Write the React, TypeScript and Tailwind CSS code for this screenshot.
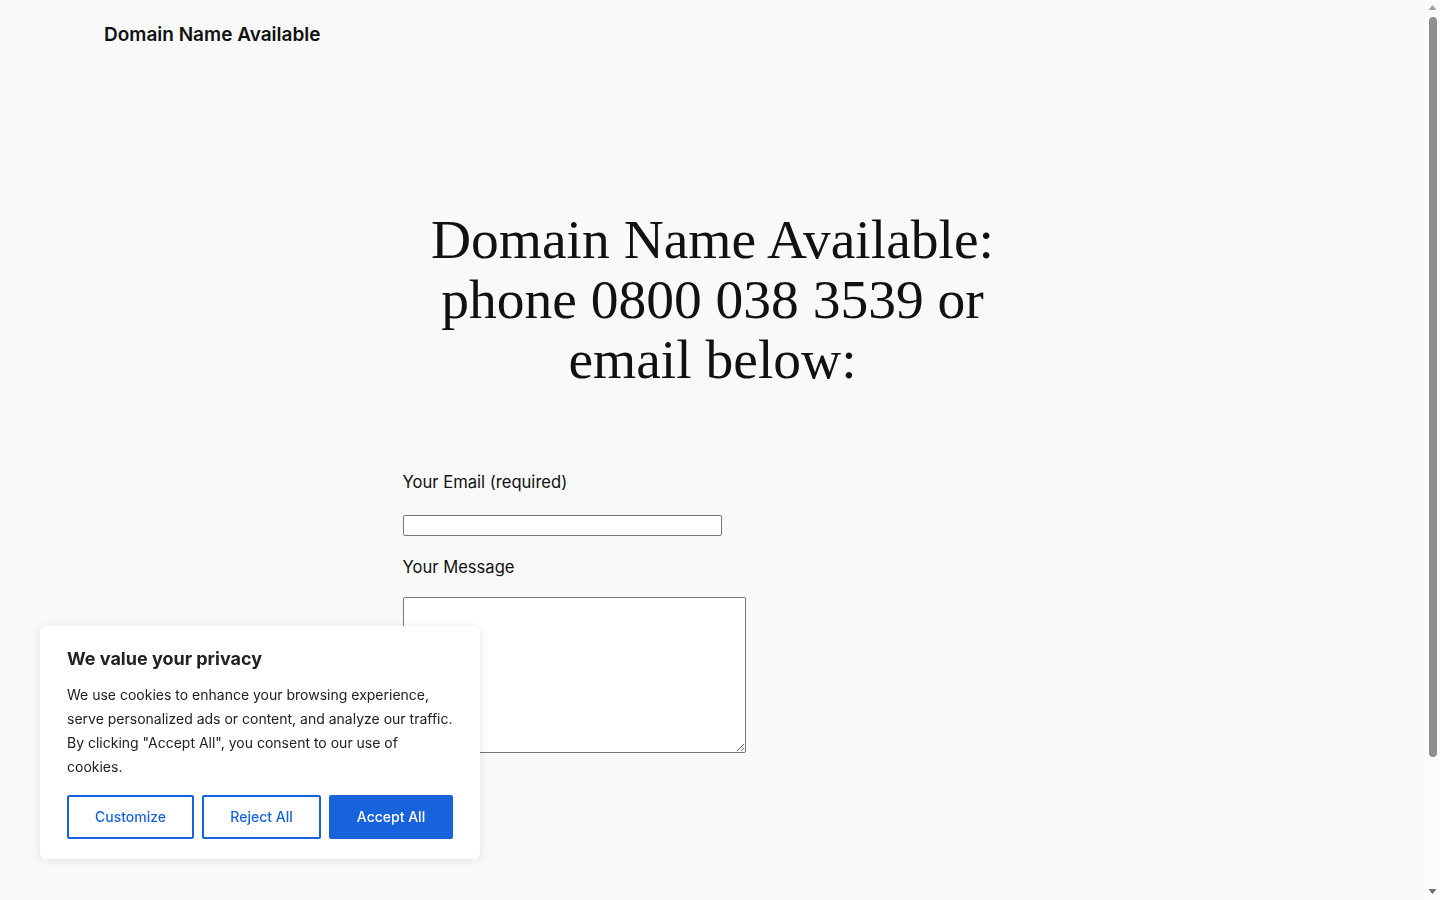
import React from "react";

function FakeScrollbar() {
  return (
    <div className="fixed right-0 top-0 flex h-screen w-[15px] flex-col items-center bg-[#fbfbfb]">
      <svg width="15" height="15" viewBox="0 0 15 15" className="shrink-0">
        <polygon points="3.5,10 11.5,10 7.5,5" fill="#a3a3a3" />
      </svg>
      <div className="mt-[2px] h-[740px] w-[8px] rounded-full bg-[#8f8f8f]" />
      <div className="flex-1" />
      <svg width="15" height="15" viewBox="0 0 15 15" className="shrink-0">
        <polygon points="3.5,4 11.5,4 7.5,9" fill="#6f6f6f" />
      </svg>
    </div>
  );
}

export default function App() {
  return (
    <div className="min-h-[1050px] bg-[#f9f9f9] pr-[15px] text-[#111111]" style={{ fontFamily: "Inter, 'Noto Sans', sans-serif" }}>
      <header className="px-[104px] pt-[22px]">
        <div className="text-[19px] font-semibold leading-[25px] text-[#111]">Domain Name Available</div>
      </header>
      <main className="mx-auto w-[620px] pt-[163px]">
        <h1
          className="text-center text-[55.5px] leading-[60px] font-normal text-[#111]"
          style={{ fontFamily: "'Liberation Serif', 'DejaVu Serif', serif" }}
        >
          Domain Name Available: phone 0800 038 3539 or email below:
        </h1>
        <form className="mt-[80px] flex flex-col">
          <label className="text-[16.6px] leading-[24px] text-[#111]">Your Email (required)</label>
          <input type="email" className="mt-[21px] h-[21px] w-[319px] rounded-[2px] border border-[#767676] bg-white" />
          <label className="mt-[19px] text-[16.6px] leading-[24px] text-[#111]">Your Message</label>
          <textarea className="mt-[18px] h-[156px] w-[343px] rounded-[2px] border border-[#767676] bg-white" />
        </form>
      </main>
      <div className="fixed left-[40px] bottom-[41px] w-[440px] rounded-[6px] bg-white px-[27px] pt-[21px] pb-[20px] shadow-[0_1px_10px_rgba(0,0,0,0.1)]">
        <div className="text-[18px] font-bold leading-[24px] text-[#212121]">We value your privacy</div>
        <p className="mt-[12px] text-[14px] leading-[24px] text-[#212121]">
          We use cookies to enhance your browsing experience, serve personalized ads or content, and analyze our traffic. By clicking "Accept All", you consent to our use of cookies.
        </p>
        <div className="mt-[16px] flex gap-[8px]">
          <button className="h-[44px] w-[127px] rounded-[2px] border-2 border-[#1863dc] bg-transparent text-[14px] font-medium leading-[20px] text-[#1863dc]">Customize</button>
          <button className="h-[44px] w-[119px] rounded-[2px] border-2 border-[#1863dc] bg-transparent text-[14px] font-medium leading-[20px] text-[#1863dc]">Reject All</button>
          <button className="h-[44px] w-[124px] rounded-[2px] border-2 border-[#1863dc] bg-[#1863dc] text-[14px] font-medium leading-[20px] text-white">Accept All</button>
        </div>
      </div>
      <FakeScrollbar />
    </div>
  );
}
